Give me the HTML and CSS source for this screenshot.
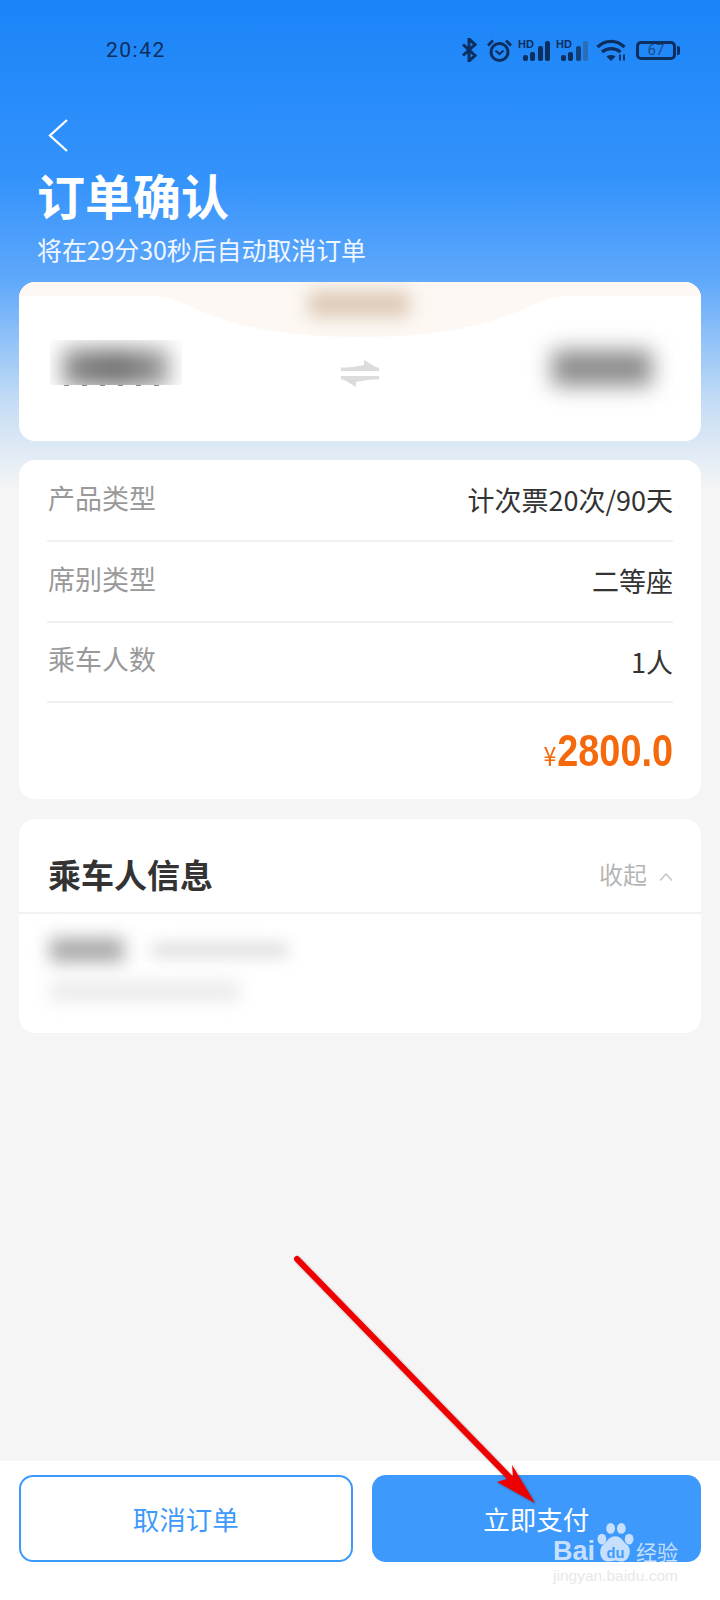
FILE: index.html
```html
<!DOCTYPE html>
<html lang="zh-CN">
<head>
    <meta charset="UTF-8">
    <meta name="viewport" content="width=device-width, initial-scale=1.0">
    <title>订单确认</title>
    <link rel="stylesheet" href="styles.css">
</head>
<body>

<div class="page">
    <!-- Status bar -->
    <div class="status-bar">
        <span class="time">20:42</span>
        <div class="status-icons">
            <svg width="15" height="24" viewBox="0 0 15 24" class="ic-bt"><path d="M1 6.500l12 11L7 23V1l6 5.500L1 17.500" fill="none" stroke="#0d2f5f" stroke-width="3"/></svg>
            <svg width="25" height="23" viewBox="0 0 25 23" class="ic-alarm"><circle cx="12.500" cy="13" r="8.500" fill="none" stroke="#0d2f5f" stroke-width="3"/><path d="M8.500 11.500l4 3.500 4-3.500" fill="none" stroke="#0d2f5f" stroke-width="2.200"/><path d="M1 6.500l5-5M24 6.500l-5-5" fill="none" stroke="#0d2f5f" stroke-width="2.800"/></svg>
            <div class="signal">
                <span class="hd">HD</span>
                <span class="bar b1"></span><span class="bar b2"></span><span class="bar b3"></span><span class="bar b4"></span>
            </div>
            <div class="signal weak">
                <span class="hd">HD</span>
                <span class="bar b1"></span><span class="bar b2"></span><span class="bar b3"></span><span class="bar b4"></span>
            </div>
            <svg width="31" height="22" viewBox="0 0 31 22" class="ic-wifi"><path d="M1.500 8c8-7.500 19-7.500 27 0M6 13c5.500-4.500 13-4.500 18.500 0" fill="none" stroke="#0d2f5f" stroke-width="3.200"/><path d="M10.500 17.500c2.800-2 6.500-2 9 0l-4.500 4.500z" fill="#0d2f5f"/><path d="M24 15.500v6M28 15.500v6" stroke="#0d2f5f" stroke-width="1.800"/></svg>
            <div class="battery"><span class="battery-num">67</span></div>
            <span class="battery-nub"></span>
        </div>
    </div>

    <!-- Header -->
    <div class="header">
        <svg class="back" width="22" height="35" viewBox="0 0 22 35"><path d="M20 2L3 17.500 20 33" fill="none" stroke="#fff" stroke-width="2.300"/></svg>
        <h1>订单确认</h1>
        <p>将在29分30秒后自动取消订单</p>
    </div>

    <!-- Route card -->
    <div class="card route">
        <svg class="route-bg" width="682" height="60" viewBox="0 0 682 60"><path d="M0 0H682V14H546C510 14 490 55 341 55S172 14 136 14H0Z" fill="#fdf8f3"/></svg>
        <div class="route-tag"></div>
        <div class="route-row">
            <div>
                <div class="city-box"><div class="blur-city"></div></div>
                <div class="city-specks"></div>
            </div>
            <svg class="swap" width="40" height="27" viewBox="0 0 40 27"><path d="M1 9h38L24 0v5M39 18H1l15 9v-5" fill="#dcdcdc"/><path d="M1 7.500h38v3.500H1zM1 16h38v3.500H1z" fill="#dcdcdc"/></svg>
            <div class="blur-city right"></div>
        </div>
    </div>

    <!-- Product card -->
    <div class="card info">
        <div class="row"><span class="label">产品类型</span><span class="value">计次票20次/90天</span></div>
        <div class="row"><span class="label">席别类型</span><span class="value">二等座</span></div>
        <div class="row"><span class="label">乘车人数</span><span class="value">1人</span></div>
        <div class="price"><span class="yen">¥</span>2800.0</div>
    </div>

    <!-- Passenger card -->
    <div class="card passenger">
        <div class="passenger-head">
            <h2>乘车人信息</h2>
            <div class="fold">收起
                <svg width="14" height="8" viewBox="0 0 14 8"><path d="M1 7.500L7 1l6 6.500" fill="none" stroke="#c4c4c4" stroke-width="1.500"/></svg>
            </div>
        </div>
        <div class="passenger-body">
            <div class="blur-line">
                <div class="blur-name"></div>
                <div class="blur-id"></div>
            </div>
            <div class="blur-sub"></div>
        </div>
    </div>

    <!-- Bottom buttons -->
    <div class="bottom-bar">
        <button class="btn btn-outline">取消订单</button>
        <button class="btn btn-primary">立即支付</button>
    </div>

    <!-- Red arrow drawn over the screenshot -->
    <svg class="arrow" width="720" height="1600" viewBox="0 0 720 1600">
        <defs><filter id="arrow-shadow"><feDropShadow dx="1" dy="1" stdDeviation="1" flood-color="#000" flood-opacity="0.4"/></filter></defs>
        <g filter="url(#arrow-shadow)">
            <path d="M297 1259L518 1486" stroke="#ee0000" stroke-width="6" stroke-linecap="round"/>
            <path d="M535 1503L512 1465 513 1477 497 1482Z" fill="#ee0000"/>
        </g>
    </svg>

    <!-- Watermark -->
    <div class="watermark">
        <div class="wm-top">
            <span class="wm-bai">Bai</span>
            <svg class="wm-paw" width="37" height="42" viewBox="0 0 38 42">
                <g fill="#c5dffc">
                    <ellipse cx="5" cy="17" rx="4.500" ry="5.500"/>
                    <ellipse cx="14" cy="6" rx="4.500" ry="5.500"/>
                    <ellipse cx="25" cy="6" rx="4.500" ry="5.500"/>
                    <ellipse cx="33" cy="17" rx="4.500" ry="5.500"/>
                    <path d="M19 14c6 0 8 6 12 9 5 4 3 17-6 17-3 0-4-1-6-1s-4 1-7 1c-9 0-11-12-6-17 4-3 6-9 13-9z"/>
                </g>
                <text x="19" y="36" text-anchor="middle" class="wm-du">du</text>
            </svg>
            <span class="wm-jy">经验</span>
        </div>
        <div class="wm-url">jingyan.baidu.com</div>
    </div>
</div>

</body>
</html>
```

FILE: styles.css
```css
body {
    margin: 0;
    font-family: "Noto Sans CJK SC", "Noto Sans", sans-serif;
    color: #333;
}
.page {
    position: relative;
    width: 720px;
    height: 1600px;
    overflow: hidden;
    display: flex;
    flex-direction: column;
    background: linear-gradient(180deg, #1a84f8 0, #3493fb 180px, #5fa8fb 280px, #c3dcf5 400px, #f5f5f5 490px);
}
.status-bar {
    height: 100px;
    padding: 38px 40px 0 106px;
    box-sizing: border-box;
    display: flex;
    justify-content: space-between;
    align-items: flex-start;
    flex-shrink: 0;
}
.time {
    font-family: Roboto, sans-serif;
    font-size: 21px;
    line-height: 24px;
    letter-spacing: 1.500px;
    color: #0d2f5f;
}
.status-icons {
    display: flex;
    align-items: center;
    height: 24px;
}
.ic-bt {
    margin-right: 10px;
}
.ic-alarm {
    margin-right: 6px;
}
.signal {
    position: relative;
    width: 32px;
    height: 21px;
    margin-right: 6px;
    display: flex;
    align-items: flex-end;
    justify-content: flex-end;
    gap: 2.500px;
    box-sizing: border-box;
}
.hd {
    position: absolute;
    top: -2px;
    left: 0;
    font: bold 11px/12px "Liberation Sans", sans-serif;
    color: #0d2f5f;
}
.bar {
    width: 5px;
    background: #0d2f5f;
    border-radius: 2px;
}
.b1 { height: 6px; }
.b2 { height: 9px; }
.b3 { height: 15px; }
.b4 { height: 20px; }
.weak .b4 { background: #2a6db8; }
.weak .b3 { background: #12427e; }
.ic-wifi {
    margin-left: 2px;
    margin-right: 9px;
}
.battery {
    width: 40px;
    height: 19px;
    border: 3px solid #0d2f5f;
    border-radius: 5px;
    box-sizing: border-box;
    text-align: center;
}
.battery-num {
    display: block;
    font: 15px/13px Roboto, sans-serif;
    color: #1c4d8c;
}
.battery-nub {
    width: 3px;
    height: 9px;
    margin-left: 1px;
    background: #0d2f5f;
    border-radius: 0 2px 2px 0;
}
.header {
    height: 182px;
    padding-left: 37px;
    flex-shrink: 0;
    color: #fff;
}
.back {
    display: block;
    margin: 18px 0 0 10px;
}
.header h1 {
    margin: 15px 0 0;
    font-size: 48px;
    line-height: 52px;
    font-weight: 700;
}
.header p {
    margin: 14px 0 0;
    font-size: 25px;
    line-height: 30px;
    letter-spacing: -0.100px;
    color: #f2f7ff;
}
.card {
    position: relative;
    margin: 0 19px;
    background: #fff;
    border-radius: 16px;
    overflow: hidden;
    flex-shrink: 0;
}
.route {
    height: 159px;
}
.route-bg {
    position: absolute;
    top: 0;
    left: 0;
}
.route-tag {
    position: absolute;
    top: 9px;
    left: 290px;
    width: 100px;
    height: 26px;
    background: #dcc9b6;
    filter: blur(9px);
}
.route-row {
    position: relative;
    height: 100%;
    padding: 58px 41px 0 31px;
    box-sizing: border-box;
    display: grid;
    grid-template-columns: 132px 1fr 108px;
    align-items: start;
}
.swap {
    justify-self: center;
    margin: 20px 14px 0 0;
}
.city-box {
    height: 45px;
    overflow: hidden;
    display: flex;
    justify-content: center;
    padding-top: 9px;
    box-sizing: border-box;
}
.blur-city {
    flex-shrink: 0;
    width: 106px;
    height: 38px;
    background: linear-gradient(90deg, #8c8c8c, #6e6e6e 50%, #a0a0a0);
    filter: blur(11px);
}
.city-specks {
    width: 100px;
    height: 1px;
    margin: 0 0 0 14px;
    background: repeating-linear-gradient(90deg, #888 0 5px, transparent 5px 18px);
}
.blur-city.right {
    width: 100px;
    height: 36px;
    margin-top: 10px;
    background: #8c8c8c;
}
.info {
    margin-top: 19px;
    height: 339px;
    padding: 0 28px;
}
.row {
    height: 80.500px;
    box-sizing: border-box;
    border-bottom: 2px solid #f0f0f0;
    display: flex;
    justify-content: space-between;
    align-items: center;
    padding-bottom: 4px;
}
.row:first-child {
    height: 82px;
}
.label {
    font-size: 27px;
    color: #999;
    margin: -2px 0 0 1px;
}
.value {
    font-size: 27px;
    color: #333;
    padding-top: 3px;
}
.price {
    margin-top: 20px;
    text-align: right;
    font-family: "Liberation Sans", sans-serif;
    font-size: 44px;
    line-height: 56px;
    font-weight: 700;
    color: #f5690c;
    transform: scaleX(0.86);
    transform-origin: right;
}
.yen {
    font-size: 27px;
    font-weight: 400;
    font-family: "Noto Sans CJK SC", sans-serif;
    margin-right: 1px;
}
.passenger {
    margin-top: 20px;
    height: 214px;
}
.passenger-head {
    height: 95px;
    padding: 16px 28px 0 29px;
    box-sizing: border-box;
    display: flex;
    justify-content: space-between;
    align-items: center;
    border-bottom: 2px solid #f2f2f2;
}
.passenger-head h2 {
    margin: 0;
    font-size: 33px;
    font-weight: 700;
    color: #333;
}
.fold {
    display: flex;
    align-items: center;
    gap: 12px;
    font-size: 24px;
    color: #b5b5b5;
}
.fold svg {
    margin-top: 7px;
}
.passenger-body {
    padding: 24px 31px 0;
}
.blur-line {
    display: flex;
    align-items: center;
    gap: 28px;
}
.blur-name {
    width: 74px;
    height: 24px;
    background: #a8a8a8;
    filter: blur(9px);
}
.blur-id {
    width: 136px;
    height: 14px;
    background: #dcdcdc;
    filter: blur(8px);
}
.blur-sub {
    width: 190px;
    height: 18px;
    margin-top: 20px;
    background: #e8e8e8;
    filter: blur(9px);
}
.bottom-bar {
    margin-top: auto;
    height: 139px;
    padding: 14px 19px 0;
    box-sizing: border-box;
    background: #fff;
    display: flex;
    gap: 19px;
    flex-shrink: 0;
}
.btn {
    flex: 1;
    height: 87px;
    padding: 0;
    border-radius: 14px;
    font-family: inherit;
    font-size: 26.500px;
}
.btn-outline {
    background: #fff;
    border: 2px solid #3e99fd;
    color: #3e99fd;
}
.btn-primary {
    background: #3e99fd;
    border: none;
    color: #fff;
}
.arrow {
    position: absolute;
    top: 0;
    left: 0;
    pointer-events: none;
}
.watermark {
    position: absolute;
    left: 553px;
    top: 1522px;
    width: 130px;
}
.wm-top {
    display: flex;
    align-items: flex-end;
    height: 42px;
}
.wm-bai {
    font: bold 27px/26px "Liberation Sans", sans-serif;
    color: #c5dffc;
    margin-right: 2px;
}
.wm-du {
    font: bold 15px "Liberation Sans", sans-serif;
    fill: #3e99fd;
}
.wm-jy {
    font-size: 21px;
    line-height: 26px;
    color: #c5dffc;
    margin-left: 2px;
}
.wm-url {
    margin-top: 3px;
    font: 15.500px/18px "Liberation Sans", sans-serif;
    color: #e8e8e8;
}
```
